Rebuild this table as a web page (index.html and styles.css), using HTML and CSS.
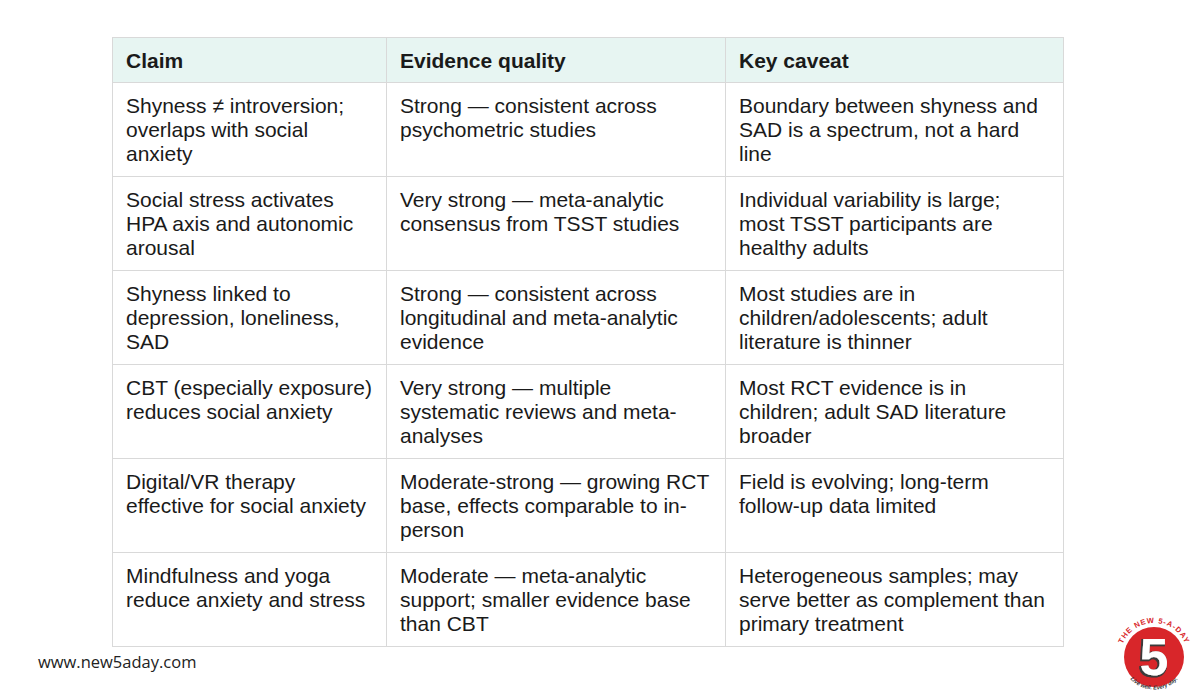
FILE: index.html
```html
<!DOCTYPE html>
<html>
<head>
<meta charset="utf-8">
<link rel="stylesheet" href="styles.css">
</head>
<body>
<main class="page">
  <table class="evidence">
    <colgroup>
      <col class="c1"><col class="c2"><col class="c3">
    </colgroup>
    <thead>
      <tr><th>Claim</th><th>Evidence quality</th><th>Key caveat</th></tr>
    </thead>
    <tbody>
      <tr>
        <td>Shyness ≠ introversion; overlaps with social anxiety</td>
        <td>Strong — consistent across psychometric studies</td>
        <td>Boundary between shyness and SAD is a spectrum, not a hard line</td>
      </tr>
      <tr>
        <td>Social stress activates HPA axis and autonomic arousal</td>
        <td>Very strong — meta-analytic consensus from TSST studies</td>
        <td>Individual variability is large; most TSST participants are healthy adults</td>
      </tr>
      <tr>
        <td>Shyness linked to depression, loneliness, SAD</td>
        <td>Strong — consistent across longitudinal and meta-analytic evidence</td>
        <td>Most studies are in children/adolescents; adult literature is thinner</td>
      </tr>
      <tr>
        <td>CBT (especially exposure) reduces social anxiety</td>
        <td>Very strong — multiple systematic reviews and meta-analyses</td>
        <td>Most RCT evidence is in children; adult SAD literature broader</td>
      </tr>
      <tr>
        <td>Digital/VR therapy effective for social anxiety</td>
        <td>Moderate-strong — growing RCT base, effects comparable to in-person</td>
        <td>Field is evolving; long-term follow-up data limited</td>
      </tr>
      <tr>
        <td>Mindfulness and yoga reduce anxiety and stress</td>
        <td>Moderate — meta-analytic support; smaller evidence base than CBT</td>
        <td>Heterogeneous samples; may serve better as complement than primary treatment</td>
      </tr>
    </tbody>
  </table>
  <footer class="foot">www.new5aday.com</footer>
  <svg class="logo" viewBox="0 0 80 80" width="80" height="80">
    <defs>
      <path id="arcTop" d="M 6 42 A 34 34 0 0 1 74 42"/>
      <path id="arcBot" d="M 12 58 A 32 32 0 0 0 68 58"/>
      <filter id="fiveShadow" x="-30%" y="-30%" width="160%" height="160%">
        <feMorphology in="SourceAlpha" operator="dilate" radius="0.8" result="thick"/>
        <feOffset in="thick" dx="-1.4" dy="1.4" result="off"/>
        <feFlood flood-color="#3a3a3a"/>
        <feComposite in2="off" operator="in" result="shadow"/>
        <feMerge>
          <feMergeNode in="shadow"/>
          <feMergeNode in="SourceGraphic"/>
        </feMerge>
      </filter>
    </defs>
    <circle cx="40" cy="42" r="30" fill="#d8262a"/>
    <text class="arc-top"><textPath href="#arcTop" startOffset="50%" text-anchor="middle">THE NEW 5-A-DAY</textPath></text>
    <text x="40" y="60" class="five" filter="url(#fiveShadow)">5</text>
    <text class="arc-bot"><textPath href="#arcBot" startOffset="50%" text-anchor="middle">Live well. Every day.</textPath></text>
  </svg>
</main>
</body>
</html>
```
FILE: styles.css
```css
html, body {
  margin: 0;
  padding: 0;
  background: #ffffff;
}
.page {
  position: relative;
  width: 1200px;
  height: 700px;
  overflow: hidden;
  padding-top: 37px;
  box-sizing: border-box;
}
.evidence {
  margin-left: 112px;
  width: 951px;
  border-collapse: collapse;
  table-layout: fixed;
  font-family: "Liberation Sans", Arial, sans-serif;
  font-size: 21px;
  line-height: 24px;
  color: #1a1a1a;
}
.c1 { width: 274px; }
.c2 { width: 339px; }
.c3 { width: 338px; }
.evidence th,
.evidence td {
  border: 1px solid #d9d9d9;
  text-align: left;
  vertical-align: top;
  padding: 11px 13px 10px;
}
.evidence th {
  background: #e7f5f2;
  font-weight: bold;
  padding: 11px 13px 9px;
  height: 24px;
}
.evidence td {
  height: 72px;
}
.foot {
  margin: 5px 0 0 38px;
  font-family: "Open Sans", "Noto Sans", sans-serif;
  font-size: 16.5px;
  line-height: 20px;
  color: #222222;
}
.logo {
  position: absolute;
  left: 1114px;
  top: 615px;
}
.arc-top {
  font-family: "Liberation Sans", Arial, sans-serif;
  font-weight: bold;
  font-size: 7.5px;
  letter-spacing: 0.9px;
  fill: #d8262a;
}
.arc-bot {
  font-family: "Liberation Sans", Arial, sans-serif;
  font-style: italic;
  font-weight: bold;
  font-size: 5.5px;
  fill: #333333;
}
.five {
  font-family: "Liberation Sans", Arial, sans-serif;
  font-weight: bold;
  font-size: 52px;
  text-anchor: middle;
  fill: #ffffff;
}
```
